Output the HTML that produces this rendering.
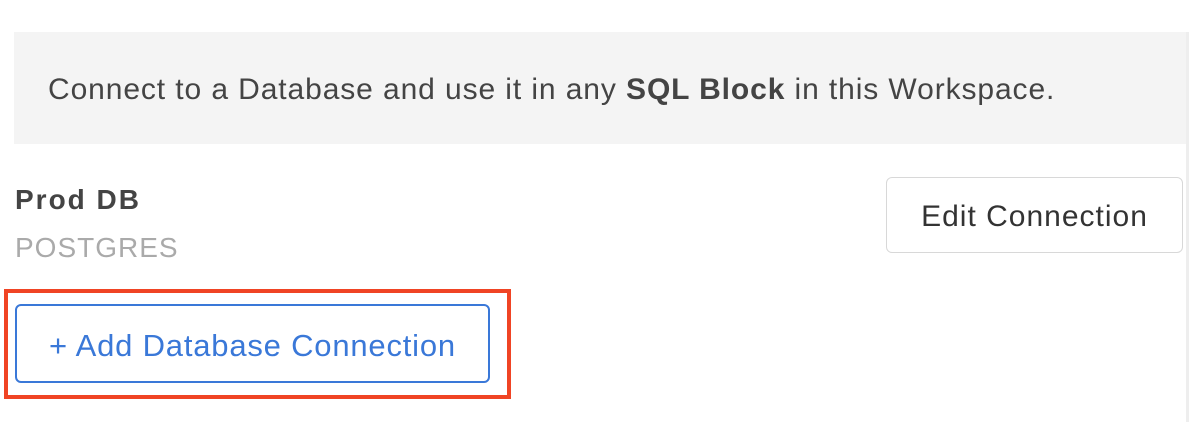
<!DOCTYPE html>
<html><head><style>
body{margin:0;width:1196px;height:422px;background:#fff;position:relative;overflow:hidden;font-family:"Liberation Sans",sans-serif;}
.vl{position:absolute;left:1186px;top:32px;width:3px;height:390px;background:#eee;}
.box{position:absolute;left:14px;top:32px;width:1172px;height:112px;background:#f4f4f4;}
.box span{position:absolute;left:34px;top:58px;font-size:30px;letter-spacing:0.9px;color:#444;white-space:nowrap;line-height:0;}
.t{position:absolute;left:15px;white-space:nowrap;line-height:1;}
.edit{position:absolute;left:886px;top:177px;width:297px;height:76px;border:1px solid #d8d8d8;border-radius:6px;box-sizing:border-box;font-size:30px;letter-spacing:1px;color:#333;text-align:center;line-height:78px;}
.red{position:absolute;left:4px;top:289px;width:507px;height:110px;border:4px solid #f04424;box-sizing:border-box;}
.add{position:absolute;left:15px;top:304px;width:475px;height:79px;border:2px solid #3a78d8;border-radius:6px;box-sizing:border-box;color:#3a78d8;font-size:31px;letter-spacing:0.8px;text-align:center;line-height:80px;}
</style></head><body>
<div class="vl"></div>
<div class="box"><span>Connect to a Database and use it in any <b>SQL Block</b> in this Workspace.</span></div>
<div class="t" style="top:186px;font-size:28px;letter-spacing:2px;font-weight:bold;color:#444;">Prod DB</div>
<div class="t" style="top:234px;font-size:28px;letter-spacing:1px;color:#aaa;">POSTGRES</div>
<div class="edit">Edit Connection</div>
<div class="red"></div>
<div class="add">+ Add Database Connection</div>
</body></html>
